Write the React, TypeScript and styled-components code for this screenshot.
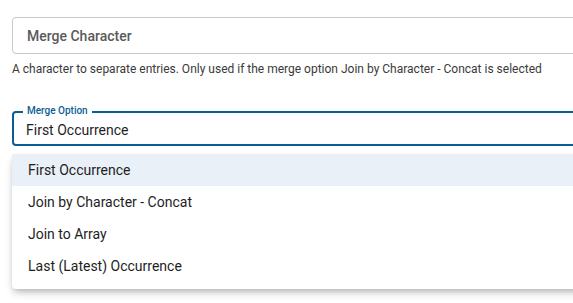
import styled, { createGlobalStyle } from 'styled-components';

const GlobalStyle = createGlobalStyle`
  html, body {
    margin: 0;
    padding: 0;
    background: #fff;
  }
  body {
    font-family: Roboto, "Liberation Sans", sans-serif;
  }
`;

const Viewport = styled.div`
  width: 100%;
  height: 303px;
  overflow: hidden;
`;

const Page = styled.div`
  width: 640px;
  padding: 17px 0 0 12px;
  display: flex;
  flex-direction: column;
`;

const TextField = styled.div`
  height: 37px;
  box-sizing: border-box;
  border: 1px solid #c8c8c8;
  border-radius: 4px;
  display: flex;
  align-items: center;
  padding-left: 14px;
  font-size: 14px;
  font-weight: 500;
  color: #5a5a5a;
`;

const HelperText = styled.div`
  margin-top: 8px;
  font-size: 12px;
  color: #3a3a3a;
`;

const SelectField = styled.div`
  margin-top: 35px;
  height: 35px;
  box-sizing: border-box;
  border: 2px solid #0a5e96;
  border-radius: 4px;
  padding: 0 0 0 12px;
  display: flex;
  align-items: center;
  position: relative;
`;

const FloatingLabel = styled.span`
  position: absolute;
  top: -8px;
  left: 9px;
  padding: 0 4px;
  background: #fff;
  font-size: 10px;
  font-weight: 500;
  color: #0a5e96;
  line-height: 12px;
`;

const SelectValue = styled.div`
  font-size: 14px;
  font-weight: 400;
  color: #1e1e1e;
  padding-top: 3px;
`;

const Menu = styled.ul`
  list-style: none;
  margin: 8px 0 0;
  padding: 0 0 7px;
  border-radius: 4px;
  background: #fff;
  box-shadow: 0 5px 8px -2px rgba(0, 0, 0, 0.25), 0 2px 4px rgba(0, 0, 0, 0.08);
`;

const MenuItem = styled.li<{ $active?: boolean }>`
  height: 32px;
  display: flex;
  align-items: center;
  padding-left: 16px;
  font-size: 14px;
  font-weight: 400;
  color: #1e1e1e;
  background: ${(p) => (p.$active ? '#e9f0f7' : 'transparent')};
`;

const options = [
  'First Occurrence',
  'Join by Character - Concat',
  'Join to Array',
  'Last (Latest) Occurrence',
];

export default function App() {
  return (
    <Viewport>
      <GlobalStyle />
      <Page>
        <TextField>Merge Character</TextField>
        <HelperText>
          A character to separate entries. Only used if the merge option Join by Character - Concat is selected
        </HelperText>
        <SelectField>
          <FloatingLabel>Merge Option</FloatingLabel>
          <SelectValue>First Occurrence</SelectValue>
        </SelectField>
        <Menu>
          {options.map((opt, i) => (
            <MenuItem key={opt} $active={i === 0}>
              {opt}
            </MenuItem>
          ))}
        </Menu>
      </Page>
    </Viewport>
  );
}
